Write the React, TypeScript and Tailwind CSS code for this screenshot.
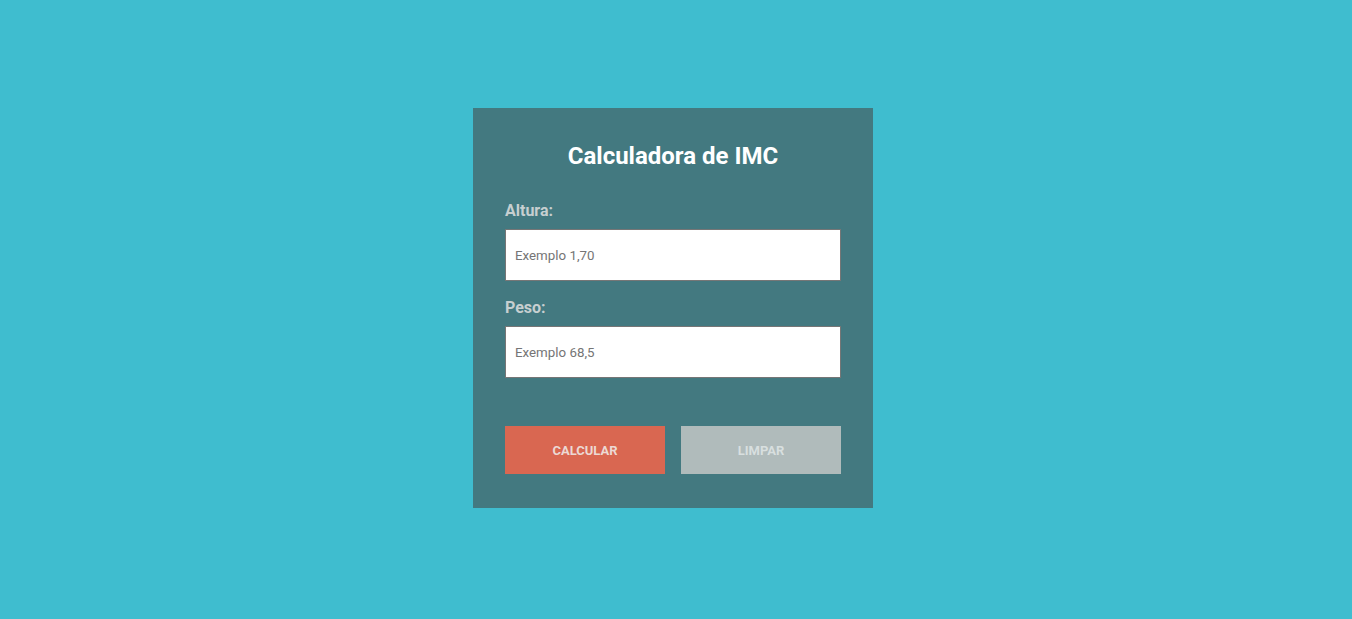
export default function App() {
  return (
    <div
      className="min-h-screen w-full bg-[#3fbdcf] flex justify-center pt-[108px] pr-[6px]"
      style={{ fontFamily: "Roboto, 'Liberation Sans', sans-serif" }}
    >
      <div className="w-[400px] h-[400px] bg-[#437980] px-8 pt-[32px]">
        <h1 className="text-[24px] leading-[33px] font-bold text-white text-center">
          Calculadora de IMC
        </h1>

        <label className="block mt-[26px] text-[16px] leading-6 font-bold text-[#c7cfd0]">
          Altura:
        </label>
        <input
          type="text"
          placeholder="Exemplo 1,70"
          className="mt-[6px] block w-full h-[52px] bg-white border border-[#767676] px-[9px] text-[13.33px] text-[#333] placeholder:text-[#757575] outline-none"
        />

        <label className="block mt-[15px] text-[16px] leading-6 font-bold text-[#c7cfd0]">
          Peso:
        </label>
        <input
          type="text"
          placeholder="Exemplo 68,5"
          className="mt-[6px] block w-full h-[52px] bg-white border border-[#767676] px-[9px] text-[13.33px] text-[#333] placeholder:text-[#757575] outline-none"
        />

        <div className="mt-12 flex gap-4">
          <button className="w-[160px] h-12 pt-[2px] bg-[#d96751] text-[#ecd9d4] text-[13px] font-bold uppercase">
            Calcular
          </button>
          <button className="w-[160px] h-12 pt-[2px] bg-[#b0bbbb] text-[#d8dfdf] text-[13px] font-bold uppercase">
            Limpar
          </button>
        </div>
      </div>
    </div>
  );
}
